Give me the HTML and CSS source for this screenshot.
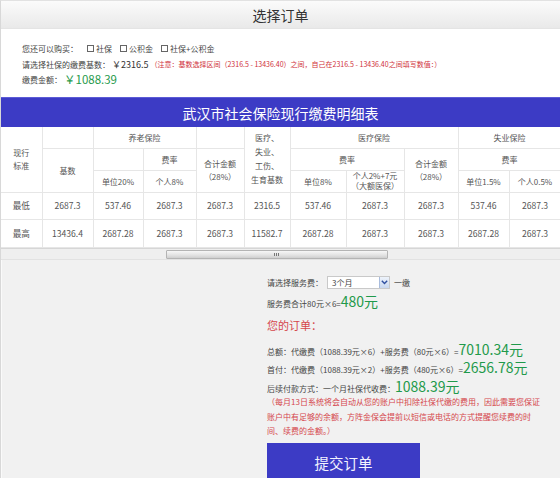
FILE: index.html
```html
<!DOCTYPE html>
<html lang="zh-CN">
<head>
<meta charset="utf-8">
<title>选择订单</title>
<link rel="stylesheet" href="styles.css">
</head>
<body>
<div class="page">
  <header class="topbar">选择订单</header>

  <section class="info">
    <div class="line">
      <span>您还可以购买：</span>
      <label class="chk"><span class="box"></span>社保</label>
      <label class="chk"><span class="box"></span>公积金</label>
      <label class="chk"><span class="box"></span>社保+公积金</label>
    </div>
    <div class="line">
      <span>请选择社保的缴费基数：</span><span class="base">￥2316.5</span>
      <span class="note">（注意：基数选择区间（2316.5 - 13436.40）之间，自己在2316.5 - 13436.40之间填写数值：）</span>
    </div>
    <div class="line">
      <span>缴费金额：</span><span class="amount">￥1088.39</span>
    </div>
  </section>

  <div class="table-title">武汉市社会保险现行缴费明细表</div>
  <div class="table-wrap">
    <table class="fees">
      <colgroup>
        <col class="c41"><col class="c51"><col class="c50"><col class="c53"><col class="c48">
        <col class="c46"><col class="c56"><col class="c58"><col class="c54"><col class="c51"><col class="c52">
      </colgroup>
      <tr class="h1">
        <td rowspan="3">现行<br>标准</td>
        <td></td>
        <td colspan="2">养老保险</td>
        <td></td>
        <td rowspan="3" class="stack">医疗、<br>失业、<br>工伤、<br>生育基数</td>
        <td colspan="3">医疗保险</td>
        <td colspan="2">失业保险</td>
      </tr>
      <tr class="h2">
        <td rowspan="2">基数</td>
        <td></td>
        <td>费率</td>
        <td rowspan="2" class="two">合计金额<br>（28%）</td>
        <td colspan="2">费率</td>
        <td rowspan="2" class="two">合计金额<br>（28%）</td>
        <td colspan="2">费率</td>
      </tr>
      <tr class="h3">
        <td>单位20%</td>
        <td>个人8%</td>
        <td>单位8%</td>
        <td class="tight">个人2%+7元<br>（大额医保）</td>
        <td>单位1.5%</td>
        <td>个人0.5%</td>
      </tr>
      <tr class="row r1">
        <td>最低</td><td>2687.3</td><td>537.46</td><td>2687.3</td><td>2687.3</td><td>2316.5</td>
        <td>537.46</td><td>2687.3</td><td>2687.3</td><td>537.46</td><td>2687.3</td>
      </tr>
      <tr class="row r2">
        <td>最高</td><td>13436.4</td><td>2687.28</td><td>2687.3</td><td>2687.3</td><td>11582.7</td>
        <td>2687.28</td><td>2687.3</td><td>2687.3</td><td>2687.28</td><td>2687.3</td>
      </tr>
    </table>
  </div>
  <div class="hscroll">
    <div class="thumb"><span class="grip"></span></div>
  </div>

  <section class="order">
    <div class="form">
      <div class="row-sel">
        <span>请选择服务费：</span>
        <span class="select"><span class="sel-text">3个月</span><span class="sel-btn"><svg width="7" height="5" viewBox="0 0 7 5"><path d="M0.8 0.8 L3.5 3.6 L6.2 0.8" fill="none" stroke="#2f4f9f" stroke-width="1.4"/></svg></span></span>
        <span>一缴</span>
      </div>
      <div class="row-fee">服务费合计80元×6=<span class="g14">480元</span></div>
      <div class="order-title">您的订单：</div>
      <div class="row-sum">总额：代缴费（1088.39元×6）+服务费（80元×6）=<span class="g15">7010.34元</span></div>
      <div class="row-sum">首付：代缴费（1088.39元×2）+服务费（480元×6）=<span class="g15">2656.78元</span></div>
      <div class="row-sum">后续付款方式：一个月社保代收费：<span class="g15">1088.39元</span></div>
      <p class="warn">（每月13日系统将会自动从您的账户中扣除社保代缴的费用，因此需要您保证账户中有足够的余额，方阵金保会提前以短信或电话的方式提醒您续费的时间、续费的金额。）</p>
      <button class="submit" type="button">提交订单</button>
    </div>
  </section>
</div>
</body>
</html>
```
FILE: styles.css
```css
* { box-sizing: border-box; }
html, body { margin: 0; padding: 0; }
body {
  width: 560px;
  height: 478px;
  overflow: hidden;
  font-family: "Noto Sans CJK SC", "Microsoft YaHei", "Noto Sans", sans-serif;
  color: #444;
  background: #f1f1f1;
}
.page {
  width: 560px;
  border-left: 1px solid #d8d8d8;
  border-top: 1px solid #e2e2e2;
}
.topbar {
  height: 28px;
  line-height: 28px;
  text-align: center;
  font-size: 14px;
  color: #333;
  background: linear-gradient(#fbfbfb, #e9e9e9);
  border-bottom: 1px solid #e4e4e4;
}
.info {
  height: 68px;
  background: #fff;
  padding: 12px 0 0 21px;
  font-size: 8px;
  color: #444;
}
.info .line {
  height: 15.5px;
  line-height: 15.5px;
  display: flex;
  align-items: center;
  white-space: nowrap;
}
.chk {
  display: inline-flex;
  align-items: center;
  margin-left: 8px;
}
.chk:first-of-type { margin-left: 9px; }
.chk .box {
  width: 7px;
  height: 7px;
  border: 1px solid #666;
  margin-right: 2px;
  background: #fff;
}
.base { font-size: 9px; color: #333; margin-left: 2px; }
.note { font-size: 7px; color: #d0313a; margin-left: 2px; }
.amount { font-size: 11.5px; color: #1f9a4b; margin-left: 2px; }

.table-title {
  height: 30px;
  line-height: 30px;
  background: #3c3bc5;
  border-top: 1px solid #5c5bd6;
  color: #fff;
  font-size: 14px;
  text-align: center;
}
.table-wrap {
  background: #fff;
  overflow: hidden;
}
.fees {
  width: 560px;
  table-layout: fixed;
  border-collapse: collapse;
  font-size: 8px;
  color: #555;
}
.fees td {
  border: 1px solid #e6e6e6;
  text-align: center;
  vertical-align: middle;
  padding: 0;
  line-height: 13px;
}
.fees tr:first-child td { border-top: 0; }
.fees td:first-child { border-left: 0; }
.c41 { width: 41px; } .c51 { width: 51px; } .c50 { width: 50px; } .c53 { width: 53px; }
.c48 { width: 48px; } .c46 { width: 46px; } .c56 { width: 56px; } .c58 { width: 58px; }
.c54 { width: 54px; } .c52 { width: 52px; }
.h1 { height: 21px; }
.h2 { height: 22px; }
.h3 { height: 22px; }
.fees .stack { line-height: 14px; }
.fees .two { line-height: 13px; }
.fees .tight { line-height: 10px; }
.row { height: 27.5px; }
.row td { font-size: 8.6px; color: #555; }

.hscroll {
  position: relative;
  height: 12px;
  background: #efefef;
  border-top: 1px solid #d6d6d6;
  border-bottom: 1px solid #e2e2e2;
}
.thumb {
  position: absolute;
  left: 165px;
  top: 1px;
  width: 222px;
  height: 9px;
  background: linear-gradient(#f7f7f7, #e2e2e2 60%, #cfcfcf);
  border: 1px solid #b4b4b4;
  border-radius: 1px;
}
.grip {
  position: absolute;
  left: 50%;
  top: 2px;
  width: 5px;
  height: 3px;
  margin-left: -3px;
  background: repeating-linear-gradient(90deg, #777 0 1px, transparent 1px 2px);
}

.order {
  background: #f1f1f1;
  padding: 14px 15px 0 265px;
  height: 220px;
  border-left: 1px solid #fafafa;
}
.form { font-size: 8px; color: #444; }
.row-sel {
  height: 18px;
  display: flex;
  align-items: center;
  white-space: nowrap;
}
.select {
  display: inline-flex;
  align-items: center;
  width: 63px;
  height: 13px;
  margin: 0 4px 0 4px;
  background: #fff;
  border: 1px solid #c9c9c9;
}
.sel-text { flex: 1; padding-left: 4px; font-size: 8px; line-height: 11px; }
.sel-btn {
  width: 10px;
  height: 11px;
  display: flex;
  align-items: center;
  justify-content: center;
  background: linear-gradient(#eef3fb, #c9d8ef);
  border-left: 1px solid #a9bcdc;
}
.row-fee {
  height: 18px;
  line-height: 18px;
  white-space: nowrap;
}
.g14 { font-size: 14px; color: #1f9a4b; }
.g15 { font-size: 14px; color: #1f9a4b; }
.order-title {
  margin-top: 5px;
  height: 20px;
  line-height: 20px;
  font-size: 11px;
  color: #d5464c;
}
.order-title + .row-sum { margin-top: 5px; }
.row-sum {
  height: 18.5px;
  line-height: 18.5px;
  white-space: nowrap;
}
.warn {
  margin: 0;
  width: 273px;
  font-size: 8px;
  line-height: 14.5px;
  color: #d5464c;
}
.submit {
  display: block;
  margin-top: 4px;
  width: 153px;
  height: 40px;
  border: 0;
  background: #3c3bc5;
  color: #f3f3ff;
  font-family: inherit;
  font-size: 14.5px;
  cursor: pointer;
}
```
